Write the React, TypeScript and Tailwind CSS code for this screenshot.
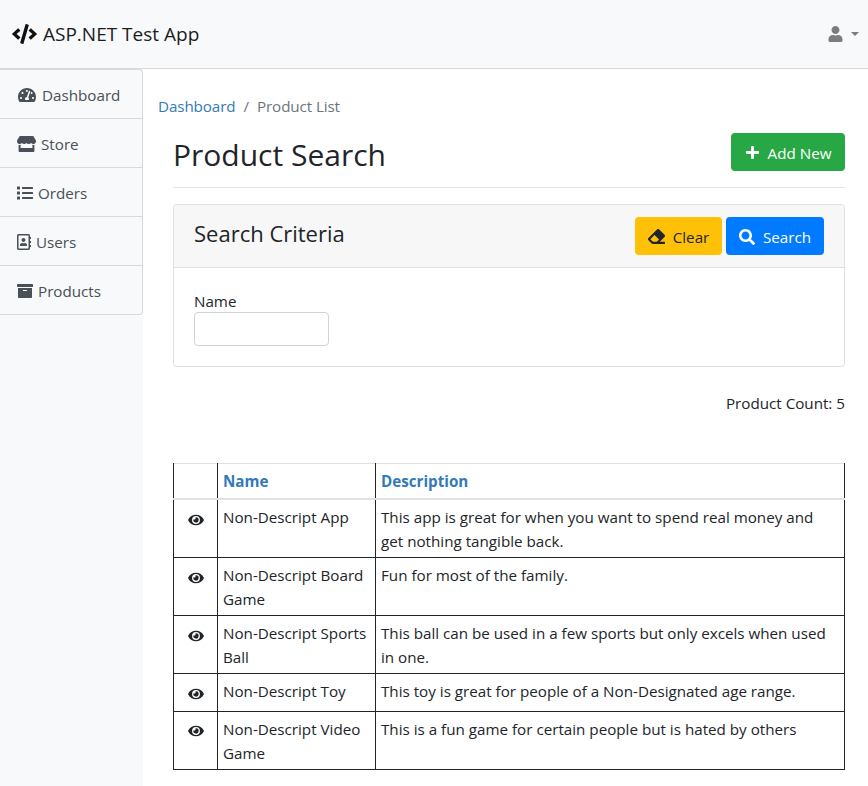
import { FaArchive, FaCode, FaEraser, FaEye, FaList, FaPlus, FaRegAddressBook, FaSearch, FaStore, FaTachometerAlt, FaUser } from "react-icons/fa";

const navItems = [
  { label: "Dashboard", icon: <FaTachometerAlt className="w-[18px] h-4" />, pad: "pl-[18px]", gap: "gap-[6px]" },
  { label: "Store", icon: <FaStore className="w-[19px] h-4" />, pad: "pl-[17px]", gap: "gap-[5px]" },
  { label: "Orders", icon: <FaList className="w-4 h-4" />, pad: "pl-[17px]", gap: "gap-[5px]" },
  { label: "Users", icon: <FaRegAddressBook className="w-[14px] h-4" />, pad: "pl-[17px]", gap: "gap-[5px]" },
  { label: "Products", icon: <FaArchive className="w-4 h-4" />, pad: "pl-[17px]", gap: "gap-[5px]" },
];

const products = [
  { name: "Non-Descript App", desc: "This app is great for when you want to spend real money and get nothing tangible back." },
  { name: "Non-Descript Board Game", desc: "Fun for most of the family." },
  { name: "Non-Descript Sports Ball", desc: "This ball can be used in a few sports but only excels when used in one." },
  { name: "Non-Descript Toy", desc: "This toy is great for people of a Non-Designated age range." },
  { name: "Non-Descript Video Game", desc: "This is a fun game for certain people but is hated by others" },
];

export default function App() {
  return (
    <div className="min-h-[786px] bg-white text-[15.2px] leading-6 text-[#212529] font-['Open_Sans',sans-serif] overflow-hidden">
      {/* Navbar */}
      <nav className="h-[69px] bg-[#f8f9fa] border-b border-[#d9d9d9] flex items-center justify-between pl-3 pr-[9px]">
        <div className="flex items-center gap-[6px] text-[19px] text-[#1c1c1c]">
          <FaCode className="w-[25px] h-5 text-[#111]" />
          <span>ASP.NET Test App</span>
        </div>
        <div className="flex items-center gap-2 text-[#7d7d7d]">
          <FaUser className="w-[15px] h-4" />
          <span className="w-0 h-0 border-x-[4px] border-x-transparent border-t-[4px] border-t-[#7d7d7d]" />
        </div>
      </nav>

      <div className="flex">
        {/* Sidebar */}
        <aside className="w-[143px] h-[717px] shrink-0 bg-[#f8f9fa]">
          <ul className="border border-l-0 border-[#d9d9d9] rounded-r bg-[#f8f9fa]">
            {navItems.map((item) => (
              <li
                key={item.label}
                className={`h-[49px] pt-[1px] border-b last:border-b-0 last:h-[48px] border-[#d9d9d9] flex items-center text-[#495057] ${item.pad} ${item.gap}`}
              >
                {item.icon}
                <span>{item.label}</span>
              </li>
            ))}
          </ul>
        </aside>

        {/* Main */}
        <main className="flex-1 pl-[15px] pr-[23px]">
          <div className="pt-[25px] h-[60px] flex gap-2 text-[#6c757d] tracking-[-0.1px]">
            <span className="text-[#337ab7]">Dashboard</span>
            <span>/</span>
            <span>Product List</span>
          </div>

          <div className="ml-[15px]">
            <div className="h-[59px] border-b border-[#e5e5e5] flex items-start justify-between">
              <h1 className="text-[30px] leading-[52px] text-[#212529]">Product Search</h1>
              <button className="mt-[4px] w-[114px] h-[38px] pt-[1px] bg-[#28a745] rounded text-white flex items-center justify-center gap-2">
                <FaPlus className="w-[15px] h-[15px]" />
                Add New
              </button>
            </div>

            {/* Search card */}
            <section className="mt-4 h-[163px] border border-[#dfdfdf] rounded">
              <div className="h-[63px] bg-[#f7f7f7] border-b border-[#dfdfdf] rounded-t flex items-center justify-between pl-5 pr-5">
                <h2 className="text-[22px] pb-[7px]">Search Criteria</h2>
                <div className="flex gap-1">
                  <button className="w-[87px] h-[38px] pt-[1px] bg-[#ffc107] rounded flex items-center justify-center gap-2">
                    <FaEraser className="w-[17px] h-[17px]" />
                    Clear
                  </button>
                  <button className="w-[98px] h-[38px] pt-[1px] bg-[#007bff] rounded text-white flex items-center justify-center gap-2">
                    <FaSearch className="w-4 h-4" />
                    Search
                  </button>
                </div>
              </div>
              <div className="pl-5 pt-[21px]">
                <label className="block h-[23px] leading-6">Name</label>
                <input className="block w-[135px] h-[34px] bg-white border border-[#ced4da] rounded" />
              </div>
            </section>

            <div className="mt-6 text-right">Product Count: 5</div>

            {/* Table */}
            <table className="mt-12 w-full border-collapse table-fixed">
              <colgroup>
                <col className="w-[44px]" />
                <col className="w-[158px]" />
                <col />
              </colgroup>
              <thead>
                <tr className="h-[35px] border-t border-t-[#dee2e6] border-b-2 border-b-[#dee2e6]">
                  <th className="border-x border-x-[#212529]" />
                  <th className="border-x border-x-[#212529] px-[5px] text-left font-bold text-[#337ab7]">Name</th>
                  <th className="border-x border-x-[#212529] px-[5px] text-left font-bold text-[#337ab7]">Description</th>
                </tr>
              </thead>
              <tbody>
                {products.map((p) => (
                  <tr key={p.name} className="group">
                    <td className="border border-[#212529] align-top">
                      <FaEye className="mx-auto mt-[13px] group-last:mt-[12px] mb-[10px] w-4 h-[14px]" />
                    </td>
                    <td className="border border-[#212529] align-top px-[5px] pt-[5px] pb-1">{p.name}</td>
                    <td className="border border-[#212529] align-top pl-[5px] pr-3 pt-[5px] pb-1">{p.desc}</td>
                  </tr>
                ))}
              </tbody>
            </table>
          </div>
        </main>
      </div>
    </div>
  );
}
